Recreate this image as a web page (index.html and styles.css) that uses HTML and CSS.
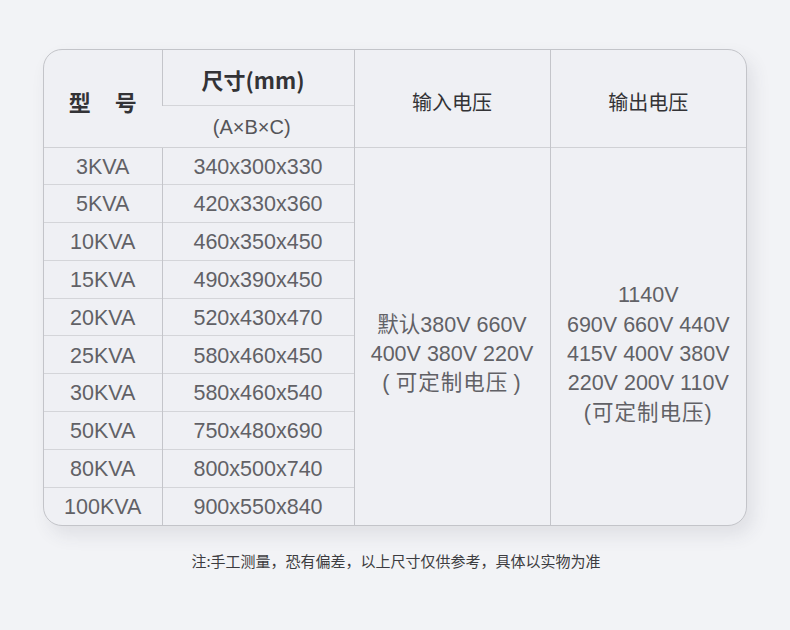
FILE: index.html
```html
<!DOCTYPE html>
<html lang="zh-CN">
<head>
<meta charset="utf-8">
<link rel="stylesheet" href="styles.css">
</head>
<body>
<div class="page">
  <div class="card">
    <table class="spec">
      <colgroup>
        <col class="c1"><col class="c2"><col class="c3"><col class="c4">
      </colgroup>
      <thead>
        <tr class="h1">
          <th rowspan="2" class="model-h">型<span class="gap"></span>号</th>
          <th class="size-h">尺寸(mm)</th>
          <th rowspan="2" class="volt-h">输入电压</th>
          <th rowspan="2" class="volt-h">输出电压</th>
        </tr>
        <tr class="h2">
          <th class="sub-h">(A×B×C)</th>
        </tr>
      </thead>
      <tbody>
        <tr><td>3KVA</td><td>340x300x330</td>
          <td rowspan="10" class="volt"><div class="vbox">默认380V 660V<br>400V 380V 220V<br><span class="cjk">(&thinsp;可定制电压&thinsp;)</span></div></td>
          <td rowspan="10" class="volt"><div class="vbox">1140V<br>690V 660V 440V<br>415V 400V 380V<br>220V 200V 110V<br><span class="cjk">(可定制电压)</span></div></td>
        </tr>
        <tr><td>5KVA</td><td>420x330x360</td></tr>
        <tr><td>10KVA</td><td>460x350x450</td></tr>
        <tr><td>15KVA</td><td>490x390x450</td></tr>
        <tr><td>20KVA</td><td>520x430x470</td></tr>
        <tr><td>25KVA</td><td>580x460x450</td></tr>
        <tr><td>30KVA</td><td>580x460x540</td></tr>
        <tr><td>50KVA</td><td>750x480x690</td></tr>
        <tr><td>80KVA</td><td>800x500x740</td></tr>
        <tr><td>100KVA</td><td>900x550x840</td></tr>
      </tbody>
    </table>
  </div>
  <p class="note">注:手工测量，恐有偏差，以上尺寸仅供参考，具体以实物为准</p>
</div>
</body>
</html>
```

FILE: styles.css
```css
html, body {
  margin: 0;
  padding: 0;
  background: #f2f3f6;
}
.page {
  width: 790px;
  height: 630px;
  padding-top: 49px;
  box-sizing: border-box;
}
.card {
  margin-left: 43px;
  width: 704px;
  box-sizing: border-box;
  border: 1px solid #c3c4c9;
  border-radius: 19px;
  overflow: hidden;
  background: #eff0f4;
  box-shadow: 6px 9px 18px rgba(60, 60, 80, 0.10);
}
.spec {
  width: 100%;
  border-collapse: collapse;
  table-layout: fixed;
  font-family: "Liberation Sans", "Noto Sans CJK SC", sans-serif;
  color: #616166;
}
.c1 { width: 118px; }
.c2 { width: 192px; }
.c3 { width: 196px; }
.c4 { width: 196px; }
.spec th, .spec td {
  padding: 0;
  text-align: center;
  vertical-align: middle;
  border-left: 1px solid #c4c5ca;
  border-top: 1px solid #d4d5d9;
}
.spec tr > :first-child { border-left: none; }
.spec thead tr.h1 > th { border-top: none; }
.spec tbody tr:first-child td { border-top: 1px solid #d0d1d5; }
.spec tbody tr:first-child td.volt + td.volt { border-left: 1px solid #c4c5ca; }
.h1 { height: 55px; }
.h2 { height: 42px; }
.spec tbody tr { height: 37.8px; }
.spec th {
  font-family: "Noto Sans CJK SC", sans-serif;
  color: #333336;
  font-weight: 400;
}
.model-h {
  font-size: 22px;
  font-weight: 700 !important;
  padding-top: 5px !important;
}
.gap { display: inline-block; width: 24px; }
.size-h {
  font-size: 22px;
  font-weight: 700 !important;
  padding-top: 3px !important;
  padding-right: 10px !important;
}
.sub-h {
  font-family: "Liberation Sans", sans-serif !important;
  font-weight: 400 !important;
  font-size: 20px;
  color: #555559 !important;
  padding-top: 2px !important;
  padding-right: 12px !important;
}
.volt-h {
  font-size: 20px;
  padding-top: 6px !important;
}
.spec td {
  font-size: 21.5px;
  line-height: 1;
  padding-top: 3px;
}
.spec td.volt {
  padding-top: 37px;
}
.vbox {
  line-height: 29.3px;
}
.cjk { letter-spacing: 1px; }
.note {
  margin: 24px 0 0 0;
  text-align: center;
  font-family: "Noto Sans CJK SC", sans-serif;
  font-size: 15px;
  color: #3c3c40;
  padding-left: 2px;
}
```
